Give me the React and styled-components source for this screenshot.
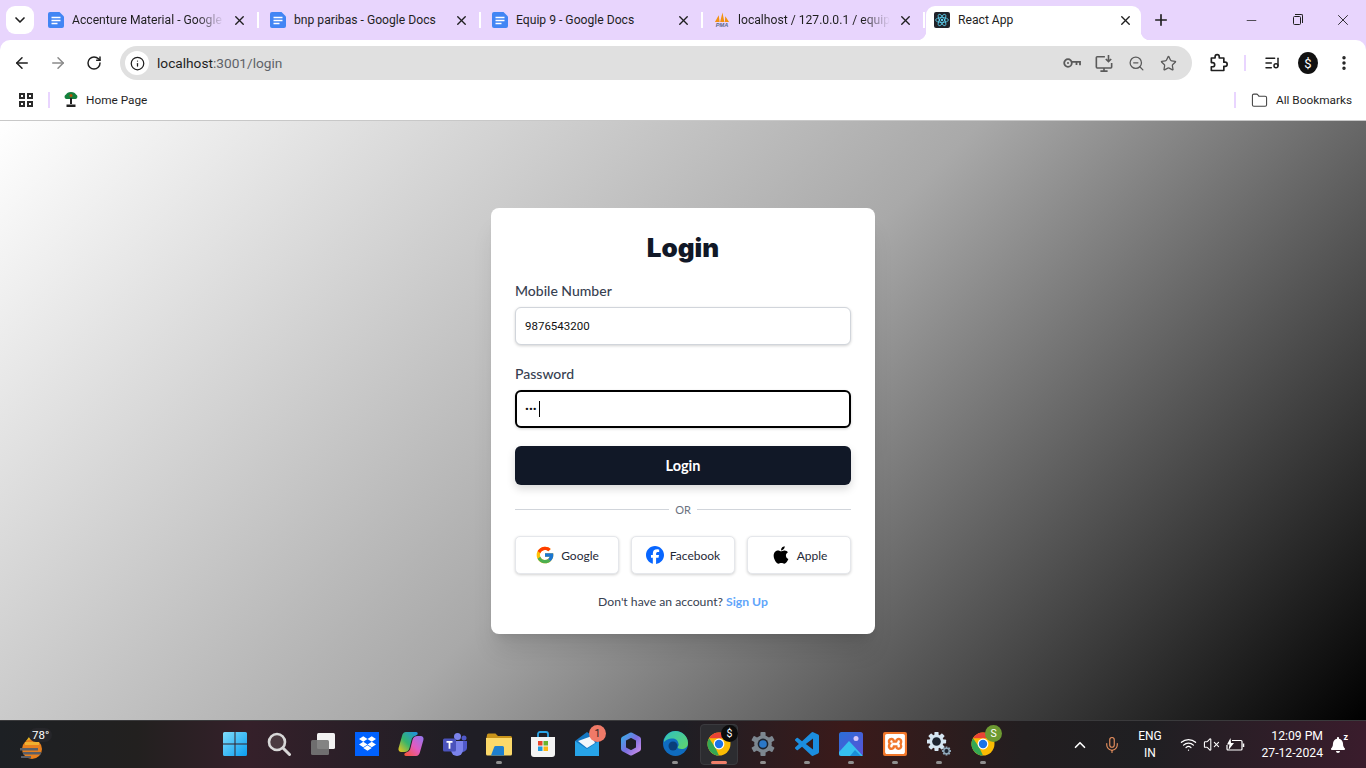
import React from 'react';
import styled, { createGlobalStyle } from 'styled-components';
import {
  ArrowLeft, ArrowRight, RotateCw, Info, ZoomOut, Star, ListMusic, EllipsisVertical,
  Folder, X, Plus, Minus, ChevronDown, ChevronUp, Mic, Wifi, VolumeX,
} from 'lucide-react';
import { FaApple, FaBell, FaDropbox } from 'react-icons/fa';
import { FcGoogle } from 'react-icons/fc';
import { SiFacebook, SiXampp } from 'react-icons/si';

const uiFont = `Roboto, "Noto Sans", sans-serif`;
const formFont = `Lato, "Open Sans", sans-serif`;

const GlobalStyle = createGlobalStyle`
  html, body { margin: 0; padding: 0; height: 100%; overflow: hidden; }
  #root { height: 100%; }
  * { box-sizing: border-box; }
`;

const Screen = styled.div`
  height: 768px;
  display: flex;
  flex-direction: column;
  background: #e8d5fd;
  font-family: ${uiFont};
`;

/* ---------- tab strip ---------- */

const TabStrip = styled.div`
  height: 40px;
  flex: none;
  display: flex;
  align-items: flex-end;
  padding-left: 6px;
`;

const TabSearch = styled.div`
  width: 28px;
  height: 28px;
  margin: 0 3px 6px 0;
  border-radius: 9px;
  background: #fff;
  display: flex;
  align-items: center;
  justify-content: center;
  color: #1f1f1f;
`;

const Tab = styled.div`
  position: relative;
  width: ${({ $active }) => ($active ? '215px' : '220px')};
  height: 34px;
  margin-left: ${({ $active }) => ($active ? '1px' : '0')};
  padding: ${({ $active }) => ($active ? '0 8px 6px' : '0 10px 6px 11px')};
  display: flex;
  align-items: center;
  gap: 8px;
  background: ${({ $active }) => ($active ? '#fff' : 'transparent')};
  border-radius: 9px 9px 0 0;
  color: #1f1f1f;

  ${({ $active }) => $active && `
    &:before, &:after {
      content: '';
      position: absolute;
      bottom: 0;
      width: 9px;
      height: 9px;
    }
    &:before { left: -9px; background: radial-gradient(circle at 0 0, transparent 9px, #fff 9.5px); }
    &:after { right: -9px; background: radial-gradient(circle at 100% 0, transparent 9px, #fff 9.5px); }
  `}
`;

const TabTitle = styled.span`
  flex: 1;
  min-width: 0;
  font-size: 12.15px;
  white-space: nowrap;
  overflow: hidden;
  ${({ $fade }) => $fade && `mask-image: linear-gradient(to right, #000 82%, transparent 100%);`}
`;

const TabSeparator = styled.div`
  width: 2px;
  height: 16px;
  margin-bottom: 12px;
  background: #fff;
  flex: none;
`;

const NewTab = styled.div`
  width: 28px;
  height: 28px;
  margin: 0 0 6px 6px;
  display: flex;
  align-items: center;
  justify-content: center;
  color: #1f1f1f;
`;

const WindowControls = styled.div`
  margin-left: auto;
  align-self: stretch;
  display: flex;
`;

const WindowButton = styled.div`
  width: 46px;
  display: flex;
  align-items: center;
  justify-content: center;
  color: #1f1f1f;
`;

const RestoreGlyph = styled.span`
  position: relative;
  width: 8px;
  height: 9px;
  border: 1px solid #1f1f1f;
  border-radius: 1.5px;
  background: #e8d5fd;

  &:before {
    content: '';
    position: absolute;
    top: -3px;
    right: -3px;
    width: 7px;
    height: 8px;
    border-top: 1px solid #1f1f1f;
    border-right: 1px solid #1f1f1f;
    border-radius: 0 2px 0 0;
  }
`;

/* ---------- toolbar ---------- */

const Toolbar = styled.div`
  height: 46px;
  flex: none;
  display: flex;
  align-items: center;
  background: #fff;
  border-radius: 10px 10px 0 0;
  padding: 0 4px;
`;

const NavButton = styled.div`
  width: 36px;
  height: 34px;
  flex: none;
  display: flex;
  align-items: center;
  justify-content: center;
  color: ${({ $muted }) => ($muted ? '#8a8a8a' : '#1f1f1f')};
`;

const AddressBar = styled.div`
  width: 1072px;
  height: 34px;
  flex: none;
  margin: 0 8px 0 8px;
  border-radius: 17px;
  background: #e0e0e0;
  display: flex;
  align-items: center;
  padding: 0 8px 0 5px;
`;

const SiteInfo = styled.div`
  width: 24px;
  height: 24px;
  border-radius: 50%;
  background: #fff;
  display: flex;
  align-items: center;
  justify-content: center;
  color: #1f1f1f;
  margin-right: 8px;
`;

const Url = styled.div`
  flex: 1;
  font-size: 13.7px;
  color: #5f6368;
  span { color: #1f1f1f; }
`;

const BarAction = styled.div`
  width: 32px;
  height: 24px;
  display: flex;
  align-items: center;
  justify-content: center;
  color: #5a5a5a;
`;

const VDivider = styled.div`
  width: 2px;
  height: 16px;
  flex: none;
  margin: 0 ${({ $inset }) => $inset || 0}px;
  background: #e9d5ff;
`;

const Avatar = styled.div`
  width: 20px;
  height: 22px;
  border-radius: 50%;
  background: #111;
  color: #fff;
  font-size: 13px;
  display: flex;
  align-items: center;
  justify-content: center;
`;

/* ---------- bookmarks ---------- */

const BookmarksBar = styled.div`
  height: 35px;
  flex: none;
  display: flex;
  align-items: center;
  background: #fff;
  border-bottom: 1px solid #c8c8c8;
  padding: 0 14px 6px 19px;
  font-size: 11.8px;
  color: #1f1f1f;
`;

const AppsGrid = styled.div`
  width: 14px;
  height: 14px;
  display: grid;
  grid-template-columns: 1fr 1fr;
  gap: 2px;
  margin-right: 15px;

  i {
    border: 2px solid #2b2b2b;
    display: block;
  }
`;

const Bookmark = styled.div`
  display: flex;
  align-items: center;
  gap: ${({ $gap }) => $gap}px;
  margin-left: ${({ $left }) => $left}px;
`;

const BookmarksEnd = styled.div`
  margin-left: auto;
  display: flex;
  align-items: center;
`;

/* ---------- login page ---------- */

const Page = styled.main`
  flex: 1;
  min-height: 0;
  display: flex;
  align-items: center;
  justify-content: center;
  background: linear-gradient(135deg, #ffffff, #a9a9a9, #000000);
  font-family: ${formFont};
`;

const Card = styled.div`
  width: 384px;
  background: #fff;
  border-radius: 8px;
  padding: 24px;
  box-shadow: 0 20px 25px -5px rgba(0, 0, 0, 0.1), 0 8px 10px -6px rgba(0, 0, 0, 0.1);
`;

const Title = styled.h1`
  margin: 0 0 16px;
  font-family: Inter, ${formFont};
  font-size: 26px;
  line-height: 32px;
  height: 34px;
  font-weight: 900;
  text-align: center;
  color: #111827;
`;

const Field = styled.div`
  position: relative;
  margin-bottom: ${({ $last }) => ($last ? '18px' : '20px')};
`;

const Label = styled.label`
  display: block;
  height: 18px;
  margin-bottom: 7px;
  font-size: 14px;
  line-height: 18px;
  font-weight: 500;
  color: #374151;
`;

const Input = styled.input`
  display: block;
  width: 100%;
  height: 38px;
  padding: 0 ${({ $focused }) => ($focused ? '8px' : '9px')};
  border: ${({ $focused }) => ($focused ? '2px solid #000' : '1px solid #d1d5db')};
  border-radius: 6px;
  box-shadow: 0 1px 3px rgba(0, 0, 0, 0.18);
  background: #fff;
  outline: none;
  caret-color: transparent;
  font-family: ${uiFont};
  font-size: 11.5px;
  color: #111;
`;

const Caret = styled.span`
  position: absolute;
  left: 24px;
  bottom: 11px;
  width: 1px;
  height: 16px;
  background: #000;
`;

const PrimaryButton = styled.button`
  display: block;
  width: 100%;
  height: 39px;
  border: 0;
  border-radius: 6px;
  background: #111827;
  color: #fff;
  font-family: ${formFont};
  font-size: 14.5px;
  font-weight: 700;
  box-shadow: 0 4px 8px rgba(0, 0, 0, 0.15);
`;

const OrDivider = styled.div`
  height: 16px;
  margin-top: 17px;
  display: flex;
  align-items: center;
  gap: 6px;
  font-size: 11px;
  color: #6b7280;

  &:before, &:after {
    content: '';
    flex: 1;
    height: 1px;
    background: #d1d5db;
  }
`;

const SocialRow = styled.div`
  margin-top: 18px;
  display: grid;
  grid-template-columns: repeat(3, 1fr);
  gap: 12px;
`;

const SocialButton = styled.button`
  height: 38px;
  border: 1px solid #e5e7eb;
  border-radius: 5px;
  background: #fff;
  box-shadow: 0 1px 3px rgba(0, 0, 0, 0.18);
  display: flex;
  align-items: center;
  justify-content: center;
  gap: 6px;
  padding: 1px 0 0;
  font-family: ${formFont};
  font-size: 12px;
  color: #1f2937;
`;

const Footer = styled.p`
  margin: 20px 0 0;
  height: 16px;
  line-height: 16px;
  text-align: center;
  font-size: 12.2px;
  color: #374151;

  a {
    color: #60a5fa;
    font-weight: 700;
    text-decoration: none;
  }
`;

/* ---------- taskbar ---------- */

const Taskbar = styled.footer`
  height: 48px;
  flex: none;
  display: flex;
  align-items: center;
  color: #fff;
  border-top: 1px solid #3a3a3c;
  background: linear-gradient(90deg, #1d2024 0%, #22201f 10%, #35202a 18%, #1f1e25 34%, #1f1e24 50%, #3b1a1a 62%, #221e20 75%, #1f1f22 84%, #3a1c2c 100%);
`;

const Weather = styled.div`
  position: relative;
  width: 213px;
  height: 100%;
  flex: none;
`;

const WeatherIcon = styled.div`
  position: absolute;
  left: 19px;
  top: 14px;
`;

const WeatherTemp = styled.span`
  position: absolute;
  left: 29px;
  top: 7px;
  padding: 0 3px;
  border-radius: 7px;
  background: #26262a;
  font-size: 11.5px;
  line-height: 14px;
`;

const Apps = styled.div`
  display: flex;
  height: 100%;
`;

const AppSlot = styled.div`
  position: relative;
  width: 44px;
  height: 100%;
  display: flex;
  align-items: center;
  justify-content: center;

  ${({ $active }) => $active && `
    &:before {
      content: '';
      position: absolute;
      left: 3px;
      right: 3px;
      top: 3px;
      bottom: 3px;
      border-radius: 4px;
      background: #2c2c30;
      border: 1px solid #3a3a3e;
    }
  `}
`;

const AppIcon = styled.div`
  position: relative;
  width: 26px;
  height: 26px;
  margin-top: -2px;
  display: flex;
  align-items: center;
  justify-content: center;
`;

const RunDot = styled.span`
  position: absolute;
  bottom: 4px;
  left: 50%;
  transform: translateX(-50%);
  width: ${({ $active }) => ($active ? '16px' : '6px')};
  height: 3px;
  border-radius: 2px;
  background: ${({ $active }) => ($active ? '#f0806a' : '#8f8f8f')};
`;

const Badge = styled.span`
  position: absolute;
  top: -6px;
  right: -6px;
  width: 17px;
  height: 17px;
  border-radius: 50%;
  background: ${({ $bg }) => $bg};
  color: ${({ $fg }) => $fg || '#fff'};
  font-size: 10.5px;
  line-height: 17px;
  text-align: center;
`;

const SolidTile = styled.div`
  width: ${({ $size }) => $size}px;
  height: ${({ $size }) => $size}px;
  border-radius: ${({ $radius }) => $radius || 0}px;
  background: ${({ $bg }) => $bg};
  display: flex;
  align-items: center;
  justify-content: center;
`;

const Tray = styled.div`
  margin-left: auto;
  padding-right: 14px;
  height: 100%;
  display: flex;
  align-items: center;
`;

const TraySlot = styled.div`
  width: ${({ $w }) => $w}px;
  display: flex;
  align-items: center;
  justify-content: center;
  color: ${({ $color }) => $color || '#fff'};
`;

const Lang = styled.div`
  width: 44px;
  margin-right: 4px;
  text-align: center;
  font-size: 12px;
  line-height: 17px;
`;

const Clock = styled.div`
  width: 76px;
  padding-right: 1px;
  text-align: right;
  font-size: 12.2px;
  line-height: 17px;
  white-space: nowrap;
`;

const BellWrap = styled.div`
  position: relative;
  width: 28px;
  display: flex;
  justify-content: center;

  span {
    position: absolute;
    top: -5px;
    right: 4px;
    font-size: 9px;
    font-weight: 700;
  }
`;

/* ---------- drawn icons ---------- */

const DocsIcon = () => (
  <svg width="16" height="16" viewBox="0 0 16 16" style={{ flex: 'none' }}>
    <path d="M2 0H11.500L16 4.500V14a2 2 0 0 1-2 2H2a2 2 0 0 1-2-2V2a2 2 0 0 1 2-2z" fill="#4285f4" />
    <path d="M3.500 5.500h9M3.500 8.500h9M3.500 11.500h6" stroke="#fff" strokeWidth="1.600" />
  </svg>
);

const PmaIcon = () => (
  <svg width="16" height="16" viewBox="0 0 17 16" style={{ flex: 'none' }}>
    <path d="M1 10 L5 3 L6 10z M6.500 10 L9 0 L11 10z M11.500 10 L12 4 L16 10z" fill="#f29111" />
    <text x="8.500" y="15.500" textAnchor="middle" fontSize="6" fontStyle="italic" fontWeight="700" fill="#5a6a8a" fontFamily="Liberation Sans, sans-serif">PMA</text>
  </svg>
);

const ReactFavicon = () => (
  <SolidTile $size={16} $radius={2} $bg="#20232a">
    <svg width="14" height="14" viewBox="-12 -12 24 24" fill="none" stroke="#61dafb" strokeWidth="1.300">
      <circle r="2" fill="#61dafb" stroke="none" />
      <ellipse rx="11" ry="4.200" />
      <ellipse rx="11" ry="4.200" transform="rotate(60)" />
      <ellipse rx="11" ry="4.200" transform="rotate(120)" />
    </svg>
  </SolidTile>
);

const TreeIcon = () => (
  <svg width="14" height="16" viewBox="0 0 14 16">
    <path d="M7 0c3 0 4 1 5 2.500 2 1 2 4-.5 4.500H2.500C0 6.500 0 3.500 2 2.500 3 1 4 0 7 0z" fill="#15803d" />
    <circle cx="7" cy="3.500" r="1.500" fill="#b45309" />
    <path d="M6 6h2v6H6zM2.500 12.500h9V15h-9z" fill="#222" />
  </svg>
);

const KeyIcon = () => (
  <svg width="18" height="12" viewBox="0 0 18 12" fill="none" stroke="#5a5a5a" strokeWidth="1.800">
    <circle cx="5" cy="6" r="3.800" />
    <circle cx="5" cy="6" r="1" fill="#5a5a5a" stroke="none" />
    <path d="M9 4.800h8v3.400M13.500 5v3" />
  </svg>
);

const InstallIcon = () => (
  <svg width="18" height="18" viewBox="0 0 20 20" fill="none" stroke="#5a5a5a" strokeWidth="1.800">
    <path d="M11 3H2.500a1 1 0 0 0-1 1v10.500a1 1 0 0 0 1 1h15a1 1 0 0 0 1-1V10" />
    <path d="M10 15.500V19M6 19h8" />
    <path d="M15 1v7.500M12 5.500l3 3 3-3" />
  </svg>
);

const ExtensionIcon = () => (
  <svg width="20" height="20" viewBox="0 0 24 24" fill="none" stroke="#1f1f1f" strokeWidth="2" strokeLinejoin="round">
    <path d="M4 6h4.500V4.500a2.500 2.500 0 0 1 5 0V6H19v5h1.500a2.500 2.500 0 0 1 0 5H19v5H4v-4.500h1.500a2.500 2.500 0 0 0 0-5H4z" />
  </svg>
);

const WindowsIcon = () => (
  <svg width="24" height="24" viewBox="0 0 24 24">
    <defs>
      <linearGradient id="win" x1="0" y1="0" x2="1" y2="1">
        <stop offset="0" stopColor="#7fdcfa" />
        <stop offset="1" stopColor="#0a9df0" />
      </linearGradient>
    </defs>
    <path d="M0 1.500A1.500 1.500 0 0 1 1.500 0h10v11.500H0zM12.500 0h10A1.500 1.500 0 0 1 24 1.500v10H12.500zM0 12.500h11.500V24h-10A1.500 1.500 0 0 1 0 22.500zM12.500 12.500H24v10a1.500 1.500 0 0 1-1.500 1.500h-10z" fill="url(#win)" />
  </svg>
);

const SearchIcon = () => (
  <svg width="24" height="24" viewBox="0 0 24 24" fill="none" stroke="#d8d8d8">
    <circle cx="10" cy="10" r="8" strokeWidth="2.600" fill="#4a3a40" />
    <path d="M16 16l6.500 6.500" strokeWidth="3" strokeLinecap="round" />
  </svg>
);

const TaskViewIcon = () => (
  <svg width="24" height="22" viewBox="0 0 24 22">
    <rect x="6" y="0" width="18" height="16" rx="1.500" fill="#f2f2f2" />
    <rect x="0" y="7" width="18" height="15" rx="1.500" fill="#777" fillOpacity="0.9" />
  </svg>
);

const CopilotIcon = () => (
  <svg width="26" height="26" viewBox="0 0 26 26">
    <defs>
      <linearGradient id="cpa" x1="0" y1="1" x2="1" y2="0">
        <stop offset="0" stopColor="#f5c518" />
        <stop offset="0.450" stopColor="#35b56d" />
        <stop offset="1" stopColor="#1f8fe5" />
      </linearGradient>
      <linearGradient id="cpb" x1="0" y1="1" x2="1" y2="0">
        <stop offset="0" stopColor="#f7552f" />
        <stop offset="0.500" stopColor="#e25bc0" />
        <stop offset="1" stopColor="#8f78f0" />
      </linearGradient>
    </defs>
    <path d="M8 1h10c1.500 0 2 1 1.500 2.500L17 5c-2 .5-3 2-3.500 4l-2 8c-.6 2.500-2.500 4-5 4H3.500C1 21 0 19 .6 17L4 5c.6-2.500 2-4 4-4z" fill="url(#cpa)" />
    <path d="M18 25H8c-1.500 0-2-1-1.500-2.500L9 21c2-.5 3-2 3.500-4l2-8c.6-2.500 2.500-4 5-4h3C25 5 26 7 25.400 9L22 21c-.6 2.500-2 4-4 4z" fill="url(#cpb)" />
  </svg>
);

const TeamsIcon = () => (
  <svg width="24" height="24" viewBox="0 0 24 24">
    <circle cx="14.500" cy="4.500" r="3.500" fill="#7b83eb" />
    <circle cx="21" cy="6" r="2.500" fill="#5059c9" />
    <path d="M17 9h7v7a4 4 0 0 1-7 2.500z" fill="#5059c9" />
    <path d="M8 9h12v9a6 6 0 0 1-12 0z" fill="#7b83eb" />
    <rect x="0" y="6.500" width="13" height="13" rx="1.500" fill="#4b53bc" />
    <path d="M3.500 9.800h6M6.500 9.800v7" stroke="#fff" strokeWidth="1.800" />
  </svg>
);

const ExplorerIcon = () => (
  <svg width="26" height="24" viewBox="0 0 26 24">
    <path d="M1 3a1.500 1.500 0 0 1 1.500-1.500h7L12 4h12.500A1.500 1.500 0 0 1 26 5.500V8H0z" fill="#c9941a" />
    <path d="M0 6h26v16a1.500 1.500 0 0 1-1.500 1.500h-23A1.500 1.500 0 0 1 0 22z" fill="#fbd96a" />
    <path d="M8 15.500a1.500 1.500 0 0 1 1.500-1.500h7a1.500 1.500 0 0 1 1.500 1.500V23.500H5z" fill="#1e7fce" />
  </svg>
);

const StoreIcon = () => (
  <svg width="24" height="26" viewBox="0 0 24 26">
    <path d="M7 6V3a2 2 0 0 1 2-2h6a2 2 0 0 1 2 2v3" fill="none" stroke="#2aa5e8" strokeWidth="1.800" />
    <path d="M0 6h24v17a3 3 0 0 1-3 3H3a3 3 0 0 1-3-3z" fill="#f4f4f4" />
    <rect x="7" y="10" width="4.500" height="4.500" fill="#e8452c" />
    <rect x="12.500" y="10" width="4.500" height="4.500" fill="#6ab42d" />
    <rect x="7" y="15.500" width="4.500" height="4.500" fill="#1e9be0" />
    <rect x="12.500" y="15.500" width="4.500" height="4.500" fill="#fdb813" />
  </svg>
);

const MailIcon = () => (
  <svg width="24" height="24" viewBox="0 0 24 24">
    <path d="M0 9 12 0l12 9v15H0z" fill="#1577c2" />
    <path d="M3 9 17 4l3 7-8 5z" fill="#f2f6fa" />
    <path d="M0 9l12 8 12-8v15H0z" fill="#27a4e8" />
  </svg>
);

const M365Icon = () => (
  <svg width="22" height="24" viewBox="0 0 22 24">
    <defs>
      <linearGradient id="m365" x1="0" y1="0" x2="1" y2="1">
        <stop offset="0" stopColor="#3fa8e8" />
        <stop offset="0.500" stopColor="#7a6fe0" />
        <stop offset="1" stopColor="#c58be8" />
      </linearGradient>
    </defs>
    <path d="M11 3 18.500 7v10L11 21 3.500 17V7z" fill="#1f1e25" stroke="url(#m365)" strokeWidth="5" strokeLinejoin="round" />
  </svg>
);

const EdgeIcon = () => (
  <svg width="25" height="25" viewBox="0 0 25 25">
    <defs>
      <linearGradient id="edge" x1="0" y1="0" x2="1" y2="1">
        <stop offset="0" stopColor="#2fc2c0" />
        <stop offset="1" stopColor="#62d46a" />
      </linearGradient>
    </defs>
    <circle cx="12.500" cy="12.500" r="12.500" fill="#0f6cc0" />
    <path d="M1 9C3 3 8 0 12.500 0 19 0 25 5 25 12c0 4-3 6-6.500 6-2.500 0-4-1-4-2 1-1 1.500-2 1-3.500C15 9 12 7 8 7.500 5 8 2.500 9 1 11z" fill="url(#edge)" />
    <circle cx="10" cy="15" r="4.500" fill="#0a3f7a" />
  </svg>
);

const ChromeIcon = () => (
  <svg width="24" height="24" viewBox="0 0 24 24">
    <circle cx="12" cy="12" r="11.500" fill="#fbbc04" />
    <path d="M2.040 6.250A11.500 11.500 0 0 1 21.960 6.250H12z" fill="#ea4335" />
    <path d="M12 23.500A11.500 11.500 0 0 1 2.040 6.250L8 15z" fill="#34a853" />
    <circle cx="12" cy="12" r="5.400" fill="#fff" />
    <circle cx="12" cy="12" r="4.200" fill="#1a73e8" />
  </svg>
);

const GearShape = ({ transform, body, hub, ring, teeth = [0, 45, 90, 135] }) => (
  <g transform={transform}>
    {teeth.map((a) => (
      <rect key={a} x="-2.600" y="-12" width="5.200" height="24" rx="1" fill={body} transform={`rotate(${a})`} />
    ))}
    <circle r="8.800" fill={body} />
    <circle r="5.400" fill={ring} />
    <circle r="3.800" fill={hub} />
  </g>
);

const SettingsIcon = () => (
  <svg width="24" height="24" viewBox="-12 -12 24 24">
    <GearShape teeth={[0, 60, 120]} body="#7d8790" ring="#1d2430" hub="#2b78c8" />
  </svg>
);

const GearsIcon = () => (
  <svg width="24" height="24" viewBox="0 0 24 24">
    <GearShape transform="translate(9.500 9.500) scale(0.800)" body="#d6e6f2" ring="#1c2430" hub="#1c2430" />
    <GearShape transform="translate(19.500 19) scale(0.380)" body="#8fa6b8" ring="#1c2430" hub="#1c2430" />
  </svg>
);

const VsCodeIcon = () => (
  <svg width="24" height="24" viewBox="0 0 24 24">
    <path fill="#1b8ee0" d="M23.15 2.587L18.21.21a1.494 1.494 0 0 0-1.705.29l-9.46 8.63-4.12-3.128a.999.999 0 0 0-1.276.057L.327 7.261A1 1 0 0 0 .326 8.74L3.899 12 .326 15.26a1 1 0 0 0 .001 1.479L1.65 17.94a.999.999 0 0 0 1.276.057l4.12-3.128 9.46 8.63a1.492 1.492 0 0 0 1.704.29l4.942-2.377A1.5 1.5 0 0 0 24 20.06V3.939a1.5 1.5 0 0 0-.85-1.352zm-5.146 14.861L10.826 12l7.178-5.448v10.896z" />
  </svg>
);

const PhotosIcon = () => (
  <svg width="24" height="24" viewBox="0 0 24 24">
    <defs>
      <linearGradient id="ph" x1="0" y1="0" x2="1" y2="1">
        <stop offset="0" stopColor="#2a6fd8" />
        <stop offset="1" stopColor="#5a52d6" />
      </linearGradient>
    </defs>
    <rect width="24" height="24" rx="2.500" fill="url(#ph)" />
    <circle cx="17" cy="6.500" r="2.500" fill="#d8c8fa" />
    <path d="M0 20 10 9l14 15H2.500A2.500 2.500 0 0 1 0 21.500z" fill="#36c0ef" />
    <path d="M11 24l5-6 6 6z" fill="#1a8fd8" />
  </svg>
);

const WeatherGlyph = () => (
  <svg width="26" height="26" viewBox="0 0 26 26">
    <path d="M10 2l3 4h-6z" fill="#e8b923" />
    <circle cx="13" cy="14" r="10" fill="#e8801e" />
    <path d="M6 7h14v3H6z" fill="#f0b030" />
    <path d="M1 13h18v2.500H1zM4 17h18v2.500H4zM2 21h10v2H2z" fill="#5b5f68" />
  </svg>
);

const BatteryIcon = () => (
  <svg width="20" height="16" viewBox="0 0 20 16" fill="none" stroke="#fff" strokeWidth="1.200">
    <path d="M7 3.500h9a1 1 0 0 1 1 1v7.500a1 1 0 0 1-1 1H3a1 1 0 0 1-1-1V8" />
    <path d="M18.500 6.500v3.500" strokeWidth="1.500" />
    <path d="M5.500 1 2 7.500h2.500L3.500 13 9 6H6z" fill="#fff" stroke="none" />
  </svg>
);

/* ---------- data ---------- */

const tabs = [
  { title: 'Accenture Material - Google', icon: <DocsIcon />, fade: true },
  { title: 'bnp paribas - Google Docs', icon: <DocsIcon /> },
  { title: 'Equip 9 - Google Docs', icon: <DocsIcon /> },
  { title: 'localhost / 127.0.0.1 / equip9', icon: <PmaIcon />, fade: true },
];

const taskApps = [
  { id: 'start', icon: <WindowsIcon /> },
  { id: 'search', icon: <SearchIcon /> },
  { id: 'taskview', icon: <TaskViewIcon /> },
  { id: 'dropbox', icon: <SolidTile $size={24} $bg="#0061fe"><FaDropbox size={17} color="#fff" /></SolidTile> },
  { id: 'copilot', icon: <CopilotIcon /> },
  { id: 'teams', icon: <TeamsIcon /> },
  { id: 'explorer', icon: <ExplorerIcon />, open: true },
  { id: 'store', icon: <StoreIcon /> },
  { id: 'mail', icon: <MailIcon />, badge: { text: '1', bg: '#ef7a68', fg: '#222' } },
  { id: 'm365', icon: <M365Icon /> },
  { id: 'edge', icon: <EdgeIcon />, open: true },
  { id: 'chrome', icon: <ChromeIcon />, active: true, badge: { text: '$', bg: '#0c0c0c' } },
  { id: 'settings', icon: <SettingsIcon />, open: true },
  { id: 'vscode', icon: <VsCodeIcon />, open: true },
  { id: 'photos', icon: <PhotosIcon />, open: true },
  { id: 'xampp', icon: <SolidTile $size={24} $radius={2} $bg="#f0762a"><SiXampp size={20} color="#fff" /></SolidTile>, open: true },
  { id: 'gears', icon: <GearsIcon />, open: true },
  { id: 'chrome-s', icon: <ChromeIcon />, open: true, badge: { text: 'S', bg: '#6d9a32' } },
];

export default function App() {
  return (
    <Screen>
      <GlobalStyle />

      <TabStrip>
        <TabSearch><ChevronDown size={16} strokeWidth={2.5} /></TabSearch>
        {tabs.map((t) => (
          <React.Fragment key={t.title}>
            <Tab>
              {t.icon}
              <TabTitle $fade={t.fade}>{t.title}</TabTitle>
              <X size={15} strokeWidth={2.2} />
            </Tab>
            <TabSeparator />
          </React.Fragment>
        ))}
        <Tab $active>
          <ReactFavicon />
          <TabTitle>React App</TabTitle>
          <X size={15} strokeWidth={2.2} />
        </Tab>
        <NewTab><Plus size={18} strokeWidth={2.2} /></NewTab>
        <WindowControls>
          <WindowButton><Minus size={15} strokeWidth={1.2} /></WindowButton>
          <WindowButton><RestoreGlyph /></WindowButton>
          <WindowButton><X size={18} strokeWidth={1.2} /></WindowButton>
        </WindowControls>
      </TabStrip>

      <Toolbar>
        <NavButton><ArrowLeft size={18} strokeWidth={2} /></NavButton>
        <NavButton $muted><ArrowRight size={18} strokeWidth={2} /></NavButton>
        <NavButton><RotateCw size={16} strokeWidth={2.2} /></NavButton>
        <AddressBar>
          <SiteInfo><Info size={15} strokeWidth={2} /></SiteInfo>
          <Url><span>localhost</span>:3001/login</Url>
          <BarAction><KeyIcon /></BarAction>
          <BarAction><InstallIcon /></BarAction>
          <BarAction><ZoomOut size={17} strokeWidth={1.8} /></BarAction>
          <BarAction><Star size={17} strokeWidth={1.8} /></BarAction>
        </AddressBar>
        <NavButton><ExtensionIcon /></NavButton>
        <VDivider $inset={8} />
        <NavButton><ListMusic size={16} strokeWidth={2.2} /></NavButton>
        <NavButton><Avatar>$</Avatar></NavButton>
        <NavButton><EllipsisVertical size={18} strokeWidth={2.6} /></NavButton>
      </Toolbar>

      <BookmarksBar>
        <AppsGrid><i /><i /><i /><i /></AppsGrid>
        <VDivider />
        <Bookmark $gap={8} $left={14}><TreeIcon />Home Page</Bookmark>
        <BookmarksEnd>
          <VDivider />
          <Bookmark $gap={8} $left={15}><Folder size={17} strokeWidth={1.5} color="#444" />All Bookmarks</Bookmark>
        </BookmarksEnd>
      </BookmarksBar>

      <Page>
        <Card>
          <Title>Login</Title>
          <Field>
            <Label htmlFor="mobile">Mobile Number</Label>
            <Input id="mobile" type="text" value="9876543200" readOnly />
          </Field>
          <Field $last>
            <Label htmlFor="password">Password</Label>
            <Input id="password" type="password" value="123" readOnly $focused />
            <Caret />
          </Field>
          <PrimaryButton>Login</PrimaryButton>
          <OrDivider>OR</OrDivider>
          <SocialRow>
            <SocialButton><FcGoogle size={20} />Google</SocialButton>
            <SocialButton><SiFacebook size={18} color="#0866ff" />Facebook</SocialButton>
            <SocialButton><FaApple size={20} color="#000" />Apple</SocialButton>
          </SocialRow>
          <Footer>Don't have an account? <a href="#signup">Sign Up</a></Footer>
        </Card>
      </Page>

      <Taskbar>
        <Weather>
          <WeatherIcon><WeatherGlyph /></WeatherIcon>
          <WeatherTemp>78°</WeatherTemp>
        </Weather>
        <Apps>
          {taskApps.map((a) => (
            <AppSlot key={a.id} $active={a.active}>
              <AppIcon>
                {a.icon}
                {a.badge && <Badge $bg={a.badge.bg} $fg={a.badge.fg}>{a.badge.text}</Badge>}
              </AppIcon>
              {(a.open || a.active) && <RunDot $active={a.active} />}
            </AppSlot>
          ))}
        </Apps>
        <Tray>
          <TraySlot $w={32}><ChevronUp size={18} strokeWidth={2.2} /></TraySlot>
          <TraySlot $w={32} $color="#e8915f"><Mic size={18} strokeWidth={1.5} /></TraySlot>
          <Lang>ENG<br />IN</Lang>
          <TraySlot $w={24}><Wifi size={17} strokeWidth={1.8} /></TraySlot>
          <TraySlot $w={22}><VolumeX size={17} strokeWidth={1.5} /></TraySlot>
          <TraySlot $w={26}><BatteryIcon /></TraySlot>
          <Clock>12:09 PM<br />27-12-2024</Clock>
          <BellWrap><FaBell size={16} color="#fff" /><span>z</span></BellWrap>
        </Tray>
      </Taskbar>
    </Screen>
  );
}
